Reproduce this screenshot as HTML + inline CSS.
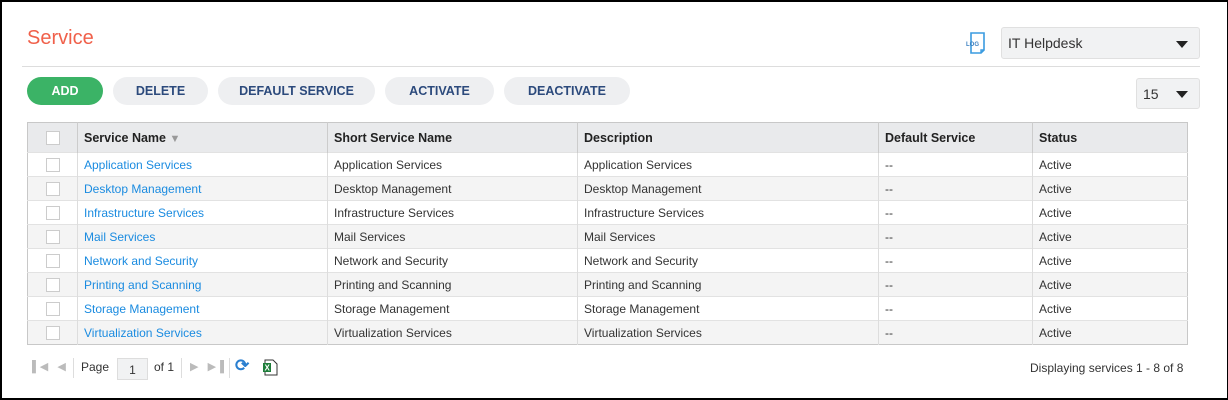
<!DOCTYPE html>
<html><head><style>
*{box-sizing:border-box;margin:0;padding:0}
body{width:1228px;height:400px;background:#fff;font-family:"Liberation Sans",Arial,sans-serif;position:relative;overflow:hidden}
.frame{position:absolute;left:0;top:0;width:1228px;height:400px;border:1px solid #000;border-left-width:2px;border-top-width:2px;border-bottom-width:2px}
.title{position:absolute;left:27px;top:27px;font-size:20px;color:#f0604a}
.hr{position:absolute;left:22px;top:66px;width:1178px;height:1px;background:#ddd}
.btn{position:absolute;top:77px;height:28px;border-radius:14px;background:#eeeff1;color:#2c4a7c;font-size:12.5px;font-weight:bold;text-align:center;line-height:28px}
.sel{position:absolute;background:#f1f2f3;border:1px solid #e0e0e0;border-radius:3px;font-size:14px;color:#333}
.tri{position:absolute;width:0;height:0;border-left:6px solid transparent;border-right:6px solid transparent;border-top:7px solid #222}
table{position:absolute;left:27px;top:122px;width:1161px;border-collapse:collapse;font-size:12px;color:#333;border:1px solid #c8c8c8}
th{background:#e9eaec;height:30px;text-align:left;font-weight:bold;font-size:12.5px;padding-left:6px;border-left:1px solid #ccc;color:#222}
td{height:24px;padding-left:6px;border-left:1px solid #ddd;border-top:1px solid #e2e2e2}
tr:nth-child(odd) td{background:#f4f4f4}
td a{color:#1a8be0;text-decoration:none}
.cb{display:inline-block;width:14px;height:14px;border:1px solid #ccc;background:#fff;vertical-align:middle}
th:first-child,td:first-child{text-align:center;padding:0;border-left:none}
.pg{position:absolute;top:358px;font-size:12px;color:#333}
</style></head><body>
<div class="frame"></div>
<div class="title">Service</div>
<svg style="position:absolute;left:966px;top:31px" width="22" height="24" viewBox="0 0 22 24"><path d="M5 2h13v17l-3 3H5z" fill="#fff" stroke="#3a9be0" stroke-width="1.6"/><path d="M15 22v-3h3" fill="none" stroke="#3a9be0" stroke-width="1.4"/><text x="0" y="15" font-size="6" font-weight="bold" fill="#3a7fc0" font-family="Liberation Sans">LOG</text></svg>
<div class="sel" style="left:1001px;top:27px;width:199px;height:32px;line-height:30px;padding-left:6px">IT Helpdesk</div>
<div class="tri" style="left:1176px;top:41px"></div>
<div class="hr"></div>
<div class="btn" style="left:27px;width:76px;background:#3bb366;color:#fff">ADD</div>
<div class="btn" style="left:113px;width:95px">DELETE</div>
<div class="btn" style="left:218px;width:157px">DEFAULT SERVICE</div>
<div class="btn" style="left:385px;width:109px">ACTIVATE</div>
<div class="btn" style="left:504px;width:126px">DEACTIVATE</div>
<div class="sel" style="left:1136px;top:78px;width:64px;height:31px;line-height:31px;padding-left:6px">15</div>
<div class="tri" style="left:1176px;top:91px"></div>
<table>
<colgroup><col style="width:50px"><col style="width:250px"><col style="width:250px"><col style="width:301px"><col style="width:154px"><col></colgroup>
<tr><th><span class="cb"></span></th><th>Service Name <span style="color:#999;font-size:11px">&#9660;</span></th><th>Short Service Name</th><th>Description</th><th>Default Service</th><th>Status</th></tr>
<tr><td><span class="cb"></span></td><td><a>Application Services</a></td><td>Application Services</td><td>Application Services</td><td>--</td><td>Active</td></tr>
<tr><td><span class="cb"></span></td><td><a>Desktop Management</a></td><td>Desktop Management</td><td>Desktop Management</td><td>--</td><td>Active</td></tr>
<tr><td><span class="cb"></span></td><td><a>Infrastructure Services</a></td><td>Infrastructure Services</td><td>Infrastructure Services</td><td>--</td><td>Active</td></tr>
<tr><td><span class="cb"></span></td><td><a>Mail Services</a></td><td>Mail Services</td><td>Mail Services</td><td>--</td><td>Active</td></tr>
<tr><td><span class="cb"></span></td><td><a>Network and Security</a></td><td>Network and Security</td><td>Network and Security</td><td>--</td><td>Active</td></tr>
<tr><td><span class="cb"></span></td><td><a>Printing and Scanning</a></td><td>Printing and Scanning</td><td>Printing and Scanning</td><td>--</td><td>Active</td></tr>
<tr><td><span class="cb"></span></td><td><a>Storage Management</a></td><td>Storage Management</td><td>Storage Management</td><td>--</td><td>Active</td></tr>
<tr><td><span class="cb"></span></td><td><a>Virtualization Services</a></td><td>Virtualization Services</td><td>Virtualization Services</td><td>--</td><td>Active</td></tr>
</table>
<div class="pg" style="left:32px;top:360px;color:#bbb;font-size:11px">&#9612;&#9664;&nbsp;&nbsp;&nbsp;&#9664;</div>
<div style="position:absolute;left:73px;top:358px;width:1px;height:20px;background:#ddd"></div>
<div class="pg" style="left:81px;top:360px">Page</div>
<div style="position:absolute;left:117px;top:358px;width:31px;height:22px;background:#f1f2f3;border:1px solid #ddd;font-size:12px;text-align:center;line-height:22px;color:#333">1</div>
<div class="pg" style="left:154px;top:360px">of 1</div>
<div style="position:absolute;left:181px;top:358px;width:1px;height:20px;background:#ddd"></div>
<div class="pg" style="left:190px;top:360px;color:#bbb;font-size:11px">&#9654;&nbsp;&nbsp;&nbsp;&#9654;&#9616;</div>
<div style="position:absolute;left:229px;top:358px;width:1px;height:20px;background:#ddd"></div>
<div class="pg" style="left:235px;top:356px;color:#2a7fd0;font-size:17px;font-weight:bold">&#10227;</div>
<svg style="position:absolute;left:262px;top:359px" width="16" height="17" viewBox="0 0 16 17"><path d="M3 1h8l4 4v11H3z" fill="#fff" stroke="#333"/><rect x="1" y="4" width="8" height="9" fill="#1e7d3a"/><text x="2.5" y="11.5" font-size="8" fill="#fff" font-weight="bold" font-family="Liberation Sans">X</text></svg>
<div class="pg" style="left:1030px;top:361px">Displaying services 1 - 8 of 8</div>
</body></html>
